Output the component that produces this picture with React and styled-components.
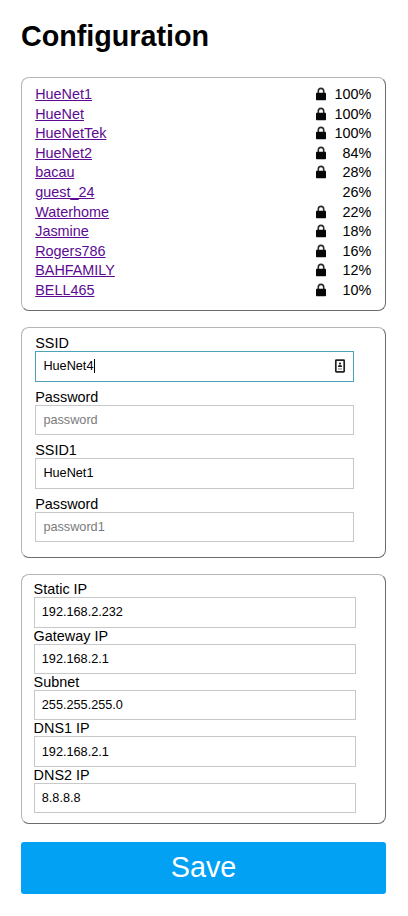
import React from "react";
import styled, { createGlobalStyle } from "styled-components";

const Global = createGlobalStyle`
  * { box-sizing: border-box; }
  body {
    margin: 0;
    background: #fff;
    color: #000;
    font-family: "Liberation Sans", Arial, sans-serif;
    font-size: 14.4px;
  }
`;

const Page = styled.main`
  width: 408px;
  height: 916px;
  padding: 20px 22px 0 21px;
`;

const Title = styled.h1`
  margin: 0 0 24px;
  font-size: 28.7px;
  line-height: 33px;
  font-weight: 700;
`;

const Panel = styled.section`
  height: ${(p) => p.$height}px;
  margin-bottom: ${(p) => p.$gap ?? 16}px;
  padding: ${(p) => p.$pad};
  border: 1px solid;
  border-color: #b5b5b5 #6b6b6b #6b6b6b #b5b5b5;
  border-radius: 8px;
`;

const Network = styled.div`
  display: flex;
  align-items: center;
  height: 19.6px;
  line-height: 16px;
`;

const NetworkLink = styled.a`
  flex: 1;
  color: #5b0a91;
  text-decoration: none;

  span {
    text-decoration: underline;
  }
`;

const Strength = styled.span`
  width: 44.6px;
  text-align: right;
`;

const Lock = styled.svg`
  display: block;
  width: 12px;
  height: 14px;
`;

const Field = styled.label`
  display: block;
  height: ${(p) => p.$pitch}px;
`;

const Caption = styled.span`
  display: block;
  height: 16.1px;
  line-height: 16px;
`;

const Box = styled.div`
  display: flex;
  align-items: center;
  width: ${(p) => p.$width}px;
  height: 30.4px;
  padding: 0 7px ${(p) => p.$lift}px 7.2px;
  border: 1px solid ${(p) => (p.$active ? "#4ba3b7" : "#c8c8c8")};
`;

const Input = styled.input`
  flex: 1;
  min-width: 0;
  height: 16px;
  padding: 0;
  border: 0;
  outline: 0;
  background: transparent;
  color: #000;
  font: 12.7px/15px "Liberation Sans", Arial, sans-serif;

  &::placeholder {
    color: #7b7b7b;
    opacity: 1;
  }
`;

const Typed = styled.span`
  flex: 1;
  display: flex;
  align-items: center;
  height: 16px;
  font-size: 12.7px;
  line-height: 15px;
`;

const Caret = styled.i`
  width: 1px;
  height: 14px;
  margin-left: 0.7px;
  background: #000;
`;

const Autofill = styled.svg`
  display: block;
  width: 12px;
  height: 14px;
`;

const Save = styled.button`
  display: block;
  width: 100%;
  height: 52px;
  padding: 0 0 2px;
  border: 0;
  border-radius: 3px;
  background: #03a1f4;
  color: #fff;
  font: 28.8px/50px "Liberation Sans", Arial, sans-serif;
`;

const networks = [
  ["HueNet1", 100, true],
  ["HueNet", 100, true],
  ["HueNetTek", 100, true],
  ["HueNet2", 84, true],
  ["bacau", 28, true],
  ["guest_24", 26, false],
  ["Waterhome", 22, true],
  ["Jasmine", 18, true],
  ["Rogers786", 16, true],
  ["BAHFAMILY", 12, true],
  ["BELL465", 10, true],
];

const addresses = [
  ["Static IP", "192.168.2.232"],
  ["Gateway IP", "192.168.2.1"],
  ["Subnet", "255.255.255.0"],
  ["DNS1 IP", "192.168.2.1"],
  ["DNS2 IP", "8.8.8.8"],
];

function LockIcon() {
  return (
    <Lock viewBox="0 0 12 14" aria-hidden="true">
      <path d="M3.3 7V4.1a2.7 2.7 0 0 1 5.4 0V7" fill="none" stroke="#2a2a2a" strokeWidth="1.6" />
      <rect x="1" y="5.8" width="10" height="7.4" rx="0.7" fill="#060808" />
    </Lock>
  );
}

function AutofillIcon() {
  return (
    <Autofill viewBox="0 0 12 14" aria-hidden="true">
      <rect x="1.8" y="1.2" width="8.4" height="11.6" rx="0.6" fill="#fff" stroke="#222" strokeWidth="1.7" />
      <circle cx="6" cy="4.6" r="1.1" fill="#222" />
      <path d="M4 8V7.2q0-1.1 2-1.1t2 1.1V8z" fill="#222" />
      <path d="M4 10h4" stroke="#777" />
    </Autofill>
  );
}

function TextField({ label, value, placeholder, width, pitch, lift }) {
  return (
    <Field $pitch={pitch}>
      <Caption>{label}</Caption>
      <Box $width={width} $lift={lift}>
        <Input defaultValue={value} placeholder={placeholder} />
      </Box>
    </Field>
  );
}

export default function App() {
  return (
    <>
      <Global />
      <Page>
        <Title>Configuration</Title>
        <Panel $height={234} $pad="6.2px 13.6px 0 13.2px">
          {networks.map(([name, strength, locked]) => (
            <Network key={name}>
              <NetworkLink href="#">
                <span>{name}</span>
              </NetworkLink>
              {locked && <LockIcon />}
              <Strength>{strength}%</Strength>
            </Network>
          ))}
        </Panel>
        <Panel $height={231} $pad="7.2px 0 0 13.2px">
          <Field as="div" $pitch={53.6}>
            <Caption>SSID</Caption>
            <Box $width={319} $lift={0.6} $active>
              <Typed>
                HueNet4
                <Caret />
              </Typed>
              <AutofillIcon />
            </Box>
          </Field>
          <TextField label="Password" placeholder="password" width={319} pitch={53.6} lift={0.6} />
          <TextField label="SSID1" value="HueNet1" width={319} pitch={53.6} lift={0.6} />
          <TextField label="Password" placeholder="password1" width={319} pitch={53.6} lift={0.6} />
        </Panel>
        <Panel $height={250} $gap={18} $pad="6.2px 0 0 11.6px">
          {addresses.map(([label, value]) => (
            <TextField key={label} label={label} value={value} width={322} pitch={46.4} lift={0.2} />
          ))}
        </Panel>
        <Save type="button">Save</Save>
      </Page>
    </>
  );
}
